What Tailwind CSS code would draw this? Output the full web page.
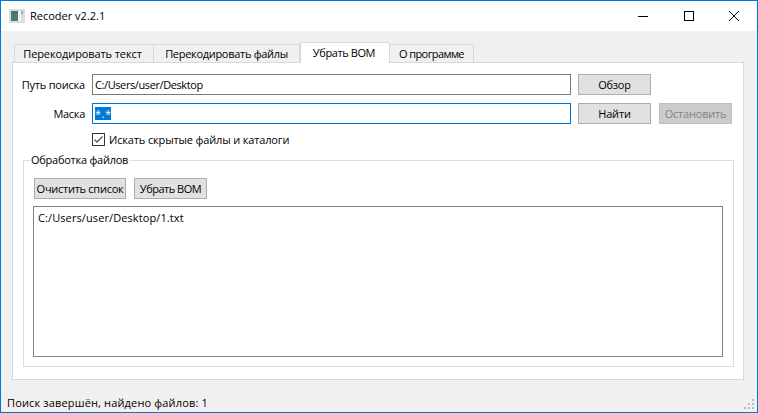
<!DOCTYPE html>
<html>
<head>
<meta charset="utf-8">
<script src="https://cdn.jsdelivr.net/npm/@tailwindcss/browser@4"></script>
<title>Recoder v2.2.1</title>
</head>
<body class="w-[758px] h-[413px] overflow-hidden">
<div class="w-[758px] h-[413px] flex flex-col border border-[#0078d7] bg-[#f0f0f0] text-[11px] leading-[16px] text-black font-['Open_Sans',sans-serif]">

  <!-- title bar -->
  <div class="h-[30px] shrink-0 bg-white flex items-center">
    <svg class="ml-[8px] mt-[-1px]" width="16" height="14" viewBox="0 0 16 14">
      <rect x="0" y="0" width="16" height="14" fill="#dcdcdc"/>
      <rect x="2" y="2" width="7" height="10" fill="#4a7f78"/>
      <rect x="2" y="2" width="7" height="3" fill="#5d6b6e"/>
      <rect x="9" y="2" width="3" height="10" fill="#f4f4f4"/>
      <rect x="12" y="2" width="2" height="3" fill="#a8a8a8"/>
    </svg>
    <span class="ml-[5px]">Recoder v2.2.1</span>
    <div class="ml-auto flex items-center">
      <div class="w-[46px] h-[30px] flex items-center justify-center">
        <svg width="10" height="10" viewBox="0 0 10 10"><path d="M0 5.5H10" stroke="#000" fill="none"/></svg>
      </div>
      <div class="w-[45px] h-[30px] flex items-center justify-center">
        <svg width="10" height="10" viewBox="0 0 10 10"><rect x="0.5" y="0.5" width="9" height="9" stroke="#000" fill="none"/></svg>
      </div>
      <div class="w-[46px] h-[30px] flex items-center justify-center">
        <svg width="10" height="10" viewBox="0 0 10 10"><path d="M0 0L10 10M10 0L0 10" stroke="#000" fill="none"/></svg>
      </div>
    </div>
  </div>

  <!-- tabs -->
  <div class="ml-[13px] mt-[11px] h-[21px] flex items-end relative z-10 -mb-px">
    <div class="h-[19px] w-[140px] border border-b-0 border-[#d9d9d9] flex items-center justify-center pr-[3px] tracking-[-0.1px]">Перекодировать текст</div>
    <div class="h-[19px] w-[146px] border border-b-0 border-l-0 border-[#d9d9d9] flex items-center justify-center tracking-[-0.3px]">Перекодировать файлы</div>
    <div class="h-[21px] w-[90px] border border-b-0 border-[#d9d9d9] bg-white flex items-center justify-center pb-[1px] pr-[2px] tracking-[-0.4px]">Убрать BOM</div>
    <div class="h-[19px] w-[84px] border border-b-0 border-l-0 border-[#d9d9d9] flex items-center justify-center tracking-[-0.6px]">О программе</div>
  </div>

  <!-- tab pane -->
  <div class="ml-[11px] w-[732px] h-[318px] border border-[#d9d9d9] bg-white flex flex-col">
    <div class="mt-[11px] flex items-center h-[21px]">
      <div class="w-[72px] text-right tracking-[-0.2px]">Путь поиска</div>
      <div class="ml-[7px] w-[479px] h-[21px] border border-[#7a7a7a] pl-[2px] flex items-center tracking-[-0.4px]">C:/Users/user/Desktop</div>
      <button class="ml-[7px] w-[73px] h-[21px] bg-[#e1e1e1] border border-[#adadad] tracking-[-0.3px]">Обзор</button>
    </div>
    <div class="mt-[8px] flex items-center h-[21px]">
      <div class="w-[72px] text-right tracking-[-0.3px]">Маска</div>
      <div class="ml-[7px] w-[479px] h-[21px] border border-[#0078d7] pl-[2px] flex items-center">
        <span class="bg-[#0078d7] text-white w-[16px] h-[13px] leading-[13px] text-center tracking-[0.5px]">*.*</span>
      </div>
      <button class="ml-[7px] w-[73px] h-[21px] bg-[#e1e1e1] border border-[#adadad] tracking-[-0.2px]">Найти</button>
      <button class="ml-[8px] w-[73px] h-[21px] bg-[#cccccc] border border-[#bfbfbf] text-[#838383] tracking-[-0.2px]">Остановить</button>
    </div>
    <div class="mt-[9px] ml-[79px] flex items-center h-[13px]">
      <svg width="13" height="13" viewBox="0 0 13 13">
        <rect x="0.5" y="0.5" width="12" height="12" fill="#fff" stroke="#333"/>
        <path d="M2.5 6.5L5 9L10.5 3.5" fill="none" stroke="#555" stroke-width="1.3"/>
      </svg>
      <span class="ml-[4px] tracking-[-0.15px]">Искать скрытые файлы и каталоги</span>
    </div>

    <!-- group box -->
    <div class="relative mt-[14px] ml-[10px] w-[711px] h-[207px] border border-[#dcdcdc] flex flex-col">
      <span class="absolute left-[6px] top-[-9px] bg-white px-[1px] tracking-[-0.25px]">Обработка файлов</span>
      <div class="mt-[17px] ml-[10px] flex">
        <button class="w-[92px] h-[21px] bg-[#e1e1e1] border border-[#adadad] whitespace-nowrap tracking-[-0.27px]">Очистить список</button>
        <button class="ml-[8px] w-[73px] h-[21px] bg-[#e1e1e1] border border-[#adadad] whitespace-nowrap tracking-[-0.5px]">Убрать BOM</button>
      </div>
      <div class="mt-[7px] ml-[9px] w-[690px] h-[151px] border border-[#828282] pl-[4px] pt-[3px] tracking-[0.1px]">C:/Users/user/Desktop/1.txt</div>
    </div>
  </div>

  <!-- status bar -->
  <div class="flex-1 relative flex items-end pb-[1px] pl-[6px]">
    <span class="tracking-[0.15px]">Поиск завершён, найдено файлов: 1</span>
    <svg class="absolute right-[1px] bottom-[1px]" width="12" height="12" viewBox="0 0 12 12" fill="#bdbdbd">
      <rect x="8" y="0" width="2" height="2"/>
      <rect x="4" y="4" width="2" height="2"/><rect x="8" y="4" width="2" height="2"/>
      <rect x="0" y="8" width="2" height="2"/><rect x="4" y="8" width="2" height="2"/><rect x="8" y="8" width="2" height="2"/>
    </svg>
  </div>
</div>
</body>
</html>
